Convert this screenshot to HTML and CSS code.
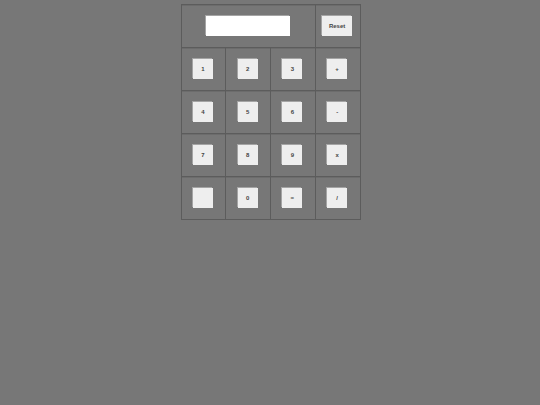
FILE: index.html
```html
<!DOCTYPE html>
<html lang="en">
<head>
<meta charset="utf-8">
<title>Calculator</title>
<link rel="stylesheet" href="styles.css">
</head>
<body>
<table class="calculator">
  <tr>
    <td colspan="3"><input class="display" type="text" aria-label="Display"></td>
    <td><button class="key reset" type="button">Reset</button></td>
  </tr>
  <tr>
    <td><button class="key" type="button">1</button></td>
    <td><button class="key" type="button">2</button></td>
    <td><button class="key" type="button">3</button></td>
    <td><button class="key" type="button">+</button></td>
  </tr>
  <tr>
    <td><button class="key" type="button">4</button></td>
    <td><button class="key" type="button">5</button></td>
    <td><button class="key" type="button">6</button></td>
    <td><button class="key" type="button">-</button></td>
  </tr>
  <tr>
    <td><button class="key" type="button">7</button></td>
    <td><button class="key" type="button">8</button></td>
    <td><button class="key" type="button">9</button></td>
    <td><button class="key" type="button">x</button></td>
  </tr>
  <tr>
    <td><button class="key" type="button" aria-label="Blank"></button></td>
    <td><button class="key" type="button">0</button></td>
    <td><button class="key" type="button">=</button></td>
    <td><button class="key" type="button">/</button></td>
  </tr>
</table>
</body>
</html>
```
FILE: styles.css
```css
body {
  margin: 0;
  padding: 4px 0 4px 1px;
  background: #777777;
  font-family: "Liberation Sans", Arial, sans-serif;
}

.calculator {
  width: 180px;
  margin: 0 auto;
  table-layout: fixed;
  border-collapse: collapse;
}

.calculator td {
  padding: 11px 1px 11px 0;
  border: 1px solid #5c5c5c;
  box-shadow: inset 0 1px 0 #6c6c6c;
  text-align: center;
  line-height: 0;
}

.key,
.display {
  box-sizing: border-box;
  height: 20px;
  padding: 0;
  border: 0;
  border-radius: 0;
  box-shadow: -1px -1px 0 #a4a4a4;
  font: bold 6px/8px "Liberation Sans", Arial, sans-serif;
  vertical-align: middle;
}

.key {
  width: 20px;
  background: #eeeeee;
  color: #444444;
}

.reset {
  width: 30px;
}

.display {
  width: 84px;
  background: #ffffff;
}
```
